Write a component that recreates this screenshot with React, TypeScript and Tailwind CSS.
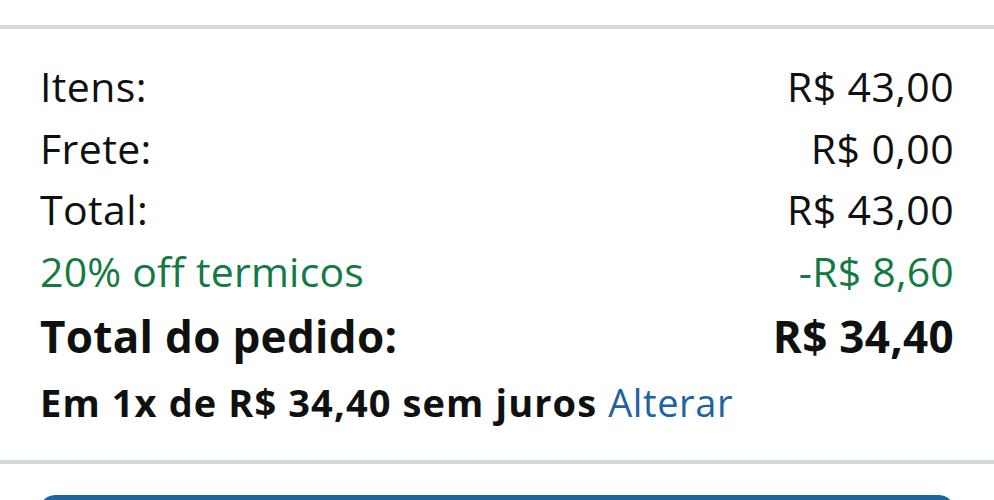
const rows = [
  { label: "Itens:", value: "R$ 43,00" },
  { label: "Frete:", value: "R$ 0,00" },
  { label: "Total:", value: "R$ 43,00" },
];

export default function App() {
  return (
    <div className="w-[994px] h-[500px] overflow-hidden bg-white text-[#0f1111]" style={{ fontFamily: '"Open Sans", "Noto Sans", sans-serif' }}>
      <div className="h-[25px]" />
      <div className="h-[4px] bg-[#d5d9d9]" />
      <div className="px-[40px] pt-[27px] pb-[25px]">
        {rows.map((r) => (
          <div key={r.label} className="flex justify-between items-baseline text-[41px] leading-[61.6px] tracking-[0.4px]">
            <span>{r.label}</span>
            <span>{r.value}</span>
          </div>
        ))}
        <div className="flex justify-between items-baseline text-[41px] leading-[61.6px] tracking-[0.2px] text-[#147a43]">
          <span>20% off termicos</span>
          <span>-R$ 8,60</span>
        </div>
        <div className="flex justify-between items-baseline text-[44px] leading-[68px] font-bold tracking-[0.3px]">
          <span>Total do pedido:</span>
          <span>R$ 34,40</span>
        </div>
        <div className="text-[38px] leading-[64.6px] tracking-[1.1px]">
          <span className="font-bold">Em 1x de R$ 34,40 sem juros</span>{" "}
          <span className="text-[#2162a1] tracking-[0.6px]">Alterar</span>
        </div>
      </div>
      <div className="h-[4px] bg-[#d5d9d9]" />
      <div className="px-[38px] pt-[31px]">
        <div className="h-[60px] rounded-[18px] bg-[#2162a1]" />
      </div>
    </div>
  );
}
